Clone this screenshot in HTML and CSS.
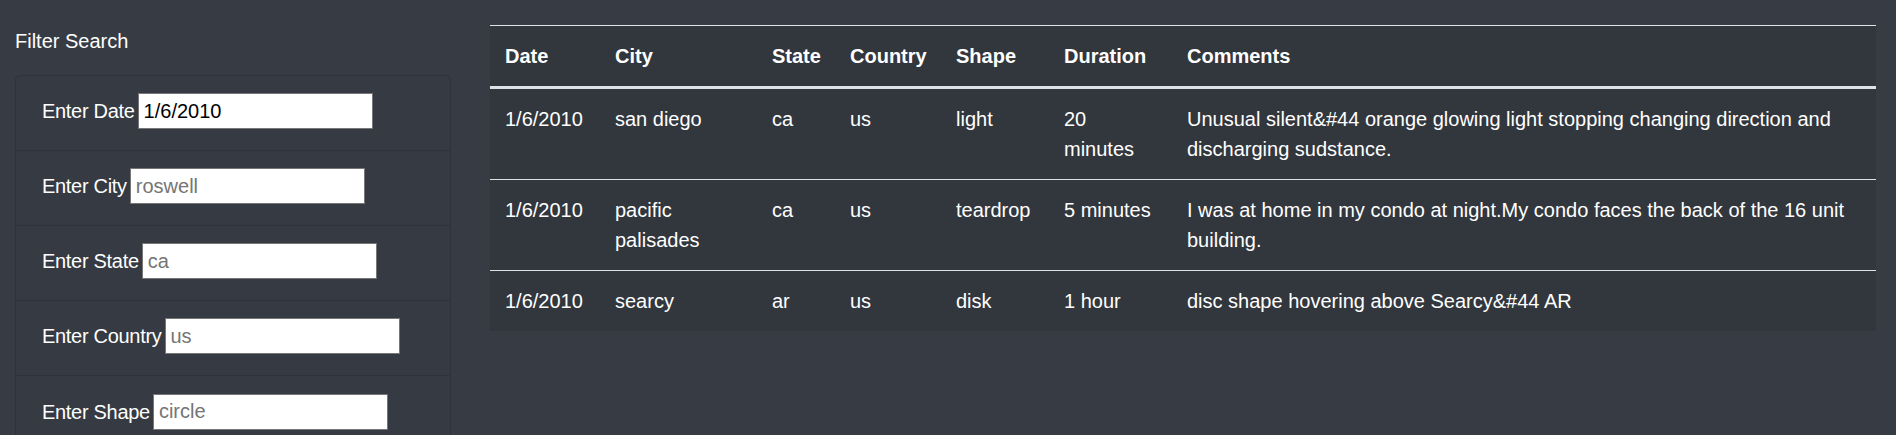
FILE: index.html
```html
<!DOCTYPE html>
<html lang="en">
<head>
<meta charset="utf-8">
<title>UFO Sightings</title>
<link rel="stylesheet" href="styles.css">
</head>
<body>
<div class="page">
  <aside class="sidebar">
    <div class="filter-title">Filter Search</div>
    <ul class="filters">
      <li class="filter-item"><label for="datetime">Enter Date</label> <input id="datetime" class="filter-input" type="text" value="1/6/2010"></li>
      <li class="filter-item"><label for="city">Enter City</label> <input id="city" class="filter-input" type="text" placeholder="roswell"></li>
      <li class="filter-item"><label for="state">Enter State</label> <input id="state" class="filter-input" type="text" placeholder="ca"></li>
      <li class="filter-item"><label for="country">Enter Country</label> <input id="country" class="filter-input" type="text" placeholder="us"></li>
      <li class="filter-item"><label for="shape">Enter Shape</label> <input id="shape" class="filter-input" type="text" placeholder="circle"></li>
    </ul>
  </aside>
  <main class="content">
    <p class="intro">Results listed by date, and then ordered by state.</p>
    <table class="ufo-table">
      <colgroup>
        <col class="c-date"><col class="c-city"><col class="c-state"><col class="c-country"><col class="c-shape"><col class="c-duration"><col class="c-comments">
      </colgroup>
      <thead>
        <tr><th>Date</th><th>City</th><th>State</th><th>Country</th><th>Shape</th><th>Duration</th><th>Comments</th></tr>
      </thead>
      <tbody>
        <tr><td>1/6/2010</td><td>san diego</td><td>ca</td><td>us</td><td>light</td><td>20 minutes</td><td>Unusual silent&amp;#44 orange glowing light stopping changing direction and discharging sudstance.</td></tr>
        <tr><td>1/6/2010</td><td>pacific palisades</td><td>ca</td><td>us</td><td>teardrop</td><td>5 minutes</td><td>I was at home in my condo at night.My condo faces the back of the 16 unit building.</td></tr>
        <tr><td>1/6/2010</td><td>searcy</td><td>ar</td><td>us</td><td>disk</td><td>1 hour</td><td>disc shape hovering above Searcy&amp;#44 AR</td></tr>
      </tbody>
    </table>
  </main>
</div>
</body>
</html>
```
FILE: styles.css
```css
html, body {
  margin: 0;
  padding: 0;
  height: 100%;
  overflow: hidden;
}
body {
  background: #373b43;
  color: #ffffff;
  font-family: "Liberation Sans", Arial, sans-serif;
  font-size: 20px;
  line-height: 30px;
}
.page {
  display: flex;
  align-items: flex-start;
  padding-left: 15px;
}
.sidebar {
  width: 436px;
  flex: none;
  padding-top: 26px;
}
.filter-title {
  line-height: 30px;
  margin-bottom: 19px;
}
.filters {
  list-style: none;
  margin: 0;
  padding: 0;
  border: 1px solid #2f333a;
  border-radius: 5px;
  background: #363a42;
}
.filter-item {
  display: flex;
  align-items: center;
  gap: 3px;
  height: 75px;
  box-sizing: border-box;
  padding: 0 25px 4px 26px;
  border-bottom: 1px solid #2f333a;
}
.filter-item:last-child {
  border-bottom: none;
}
.filter-item label {
  letter-spacing: -0.3px;
}
.filter-input {
  width: 235px;
  height: 36px;
  box-sizing: border-box;
  border: 1px solid #767676;
  border-radius: 0;
  padding: 1px 5px;
  font-family: "Liberation Sans", Arial, sans-serif;
  font-size: 20px;
  color: #000;
  background: #fff;
}
.filter-input::placeholder {
  color: #757575;
}
.content {
  margin-left: 39px;
  width: 1386px;
  flex: none;
}
.intro {
  margin: -27px 0 22px 0;
  line-height: 30px;
}
.ufo-table {
  width: 1386px;
  table-layout: fixed;
  border-collapse: collapse;
  background: #32363d;
  color: #ffffff;
}
.c-date { width: 110px; }
.c-city { width: 157px; }
.c-state { width: 78px; }
.c-country { width: 106px; }
.c-shape { width: 108px; }
.c-duration { width: 123px; }
.c-comments { width: 704px; }
.ufo-table th,
.ufo-table td {
  padding: 15px;
  text-align: left;
  vertical-align: top;
  border-top: 1px solid #dee2e6;
}
.ufo-table th {
  font-weight: bold;
  border-bottom: 3px solid #dee2e6;
}
.ufo-table tbody tr:first-child td {
  border-top: none;
}
```
